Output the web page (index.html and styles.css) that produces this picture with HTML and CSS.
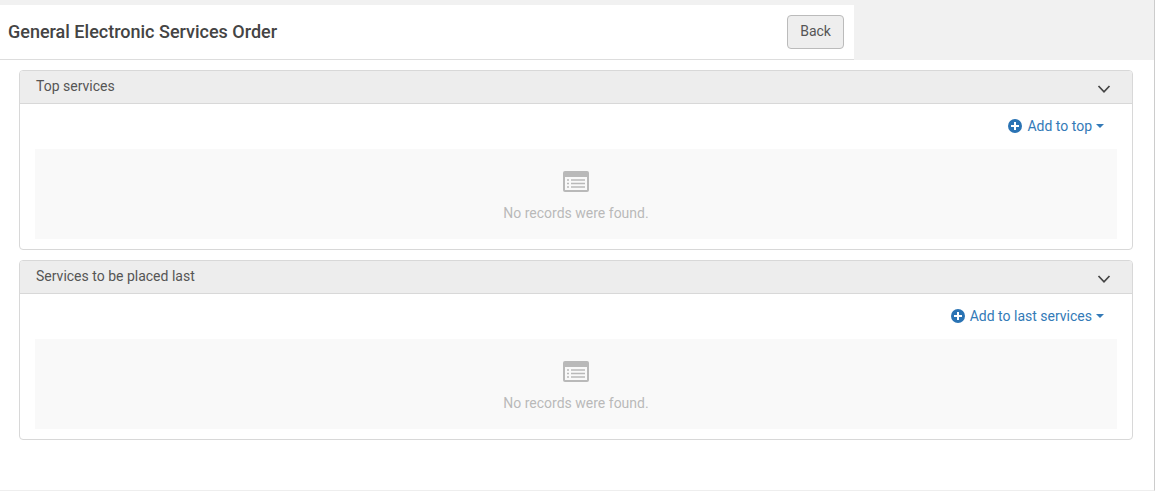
FILE: index.html
```html
<!DOCTYPE html>
<html lang="en">
<head>
    <meta charset="UTF-8">
    <meta name="viewport" content="width=device-width, initial-scale=1.0">
    <title>General Electronic Services Order</title>
    <link rel="stylesheet" href="styles.css">
</head>
<body>
    <header class="topbar">
        <div class="topbar-inner">
            <h1>General Electronic Services Order</h1>
            <button type="button" class="btn-back">Back</button>
        </div>
    </header>
    <main>
        <section class="panel">
            <div class="panel-heading">
                <h2>Top services</h2>
                <button type="button" class="toggle" aria-label="Collapse Top services">
                    <svg width="14" height="10" viewBox="0 0 14 10"><path d="M1.5 2 7 7.8 12.5 2" fill="none" stroke="#444" stroke-width="1.7"/></svg>
                </button>
            </div>
            <div class="panel-body">
                <div class="actions">
                    <a href="#" class="add">
                        <svg width="14" height="14" viewBox="0 0 14 14"><circle cx="7" cy="7" r="7" fill="#2a73b4"/><path d="M7 3v8M3 7h8" stroke="#fff" stroke-width="2"/></svg>
                        <span>Add to top</span>
                        <span class="caret"></span>
                    </a>
                </div>
                <div class="empty">
                    <svg width="26" height="21" viewBox="0 0 26 21">
                        <rect width="26" height="21" rx="2" fill="#b9b9b9"/>
                        <path d="M2 6h22v13H2z" fill="#f9f9f9"/>
                        <path d="M4 9h2M4 12.5h2M4 16h2M8 9h14M8 12.5h14M8 16h14" stroke="#b9b9b9" stroke-width="1.7"/>
                    </svg>
                    <p>No records were found.</p>
                </div>
            </div>
        </section>
        <section class="panel">
            <div class="panel-heading">
                <h2>Services to be placed last</h2>
                <button type="button" class="toggle" aria-label="Collapse Services to be placed last">
                    <svg width="14" height="10" viewBox="0 0 14 10"><path d="M1.5 2 7 7.8 12.5 2" fill="none" stroke="#444" stroke-width="1.7"/></svg>
                </button>
            </div>
            <div class="panel-body">
                <div class="actions">
                    <a href="#" class="add">
                        <svg width="14" height="14" viewBox="0 0 14 14"><circle cx="7" cy="7" r="7" fill="#2a73b4"/><path d="M7 3v8M3 7h8" stroke="#fff" stroke-width="2"/></svg>
                        <span>Add to last services</span>
                        <span class="caret"></span>
                    </a>
                </div>
                <div class="empty">
                    <svg width="26" height="21" viewBox="0 0 26 21">
                        <rect width="26" height="21" rx="2" fill="#b9b9b9"/>
                        <path d="M2 6h22v13H2z" fill="#f9f9f9"/>
                        <path d="M4 9h2M4 12.5h2M4 16h2M8 9h14M8 12.5h14M8 16h14" stroke="#b9b9b9" stroke-width="1.7"/>
                    </svg>
                    <p>No records were found.</p>
                </div>
            </div>
        </section>
    </main>
</body>
</html>
```
FILE: styles.css
```css
* {
    box-sizing: border-box;
    margin: 0;
    padding: 0;
}

body {
    min-height: 100vh;
    font-family: Roboto, "Liberation Sans", sans-serif;
    font-size: 14px;
    line-height: 20px;
    color: #555;
    background-color: #fff;
    border-right: 1px solid #ccc;
    border-bottom: 1px solid #eee;
}

svg {
    display: block;
}

.topbar {
    padding-top: 5px;
    background-color: #f1f1f1;
}

.topbar-inner {
    display: flex;
    align-items: center;
    justify-content: space-between;
    width: 74%;
    padding: 10px 10px 10px 8px;
    background-color: #fff;
    border-bottom: 1px solid #ddd;
}

h1 {
    font-size: 18px;
    font-weight: 500;
    color: #444;
}

.btn-back {
    padding: 5px 12px 7px;
    font: inherit;
    color: #555;
    background-color: #eee;
    border: 1px solid #bbb;
    border-radius: 4px;
    cursor: pointer;
}

main {
    display: flex;
    flex-direction: column;
    gap: 10px;
    padding: 10px 21px 10px 19px;
}

.panel {
    border: 1px solid #d8d8d8;
    border-radius: 4px;
}

.panel-heading {
    display: flex;
    justify-content: space-between;
    padding: 5px 20px 7px 16px;
    background-color: #ededed;
    border-bottom: 1px solid #d8d8d8;
    border-radius: 3px 3px 0 0;
}

h2 {
    font-size: 14px;
    font-weight: 400;
}

.toggle {
    padding: 8px 1px 2px;
    background: none;
    border: none;
    cursor: pointer;
}

.panel-body {
    padding: 12px 15px 10px;
}

.actions {
    display: flex;
    justify-content: flex-end;
    padding: 0 13px 13px;
}

.add {
    display: flex;
    align-items: center;
    gap: 5px;
    color: #337ab7;
    text-decoration: none;
}

.caret {
    margin-left: -1px;
    border-top: 4px solid;
    border-right: 4px solid transparent;
    border-left: 4px solid transparent;
}

.empty {
    display: flex;
    flex-direction: column;
    align-items: center;
    gap: 11px;
    padding: 22px 0 16px;
    color: #b9b9b9;
    background-color: #f9f9f9;
}
```
